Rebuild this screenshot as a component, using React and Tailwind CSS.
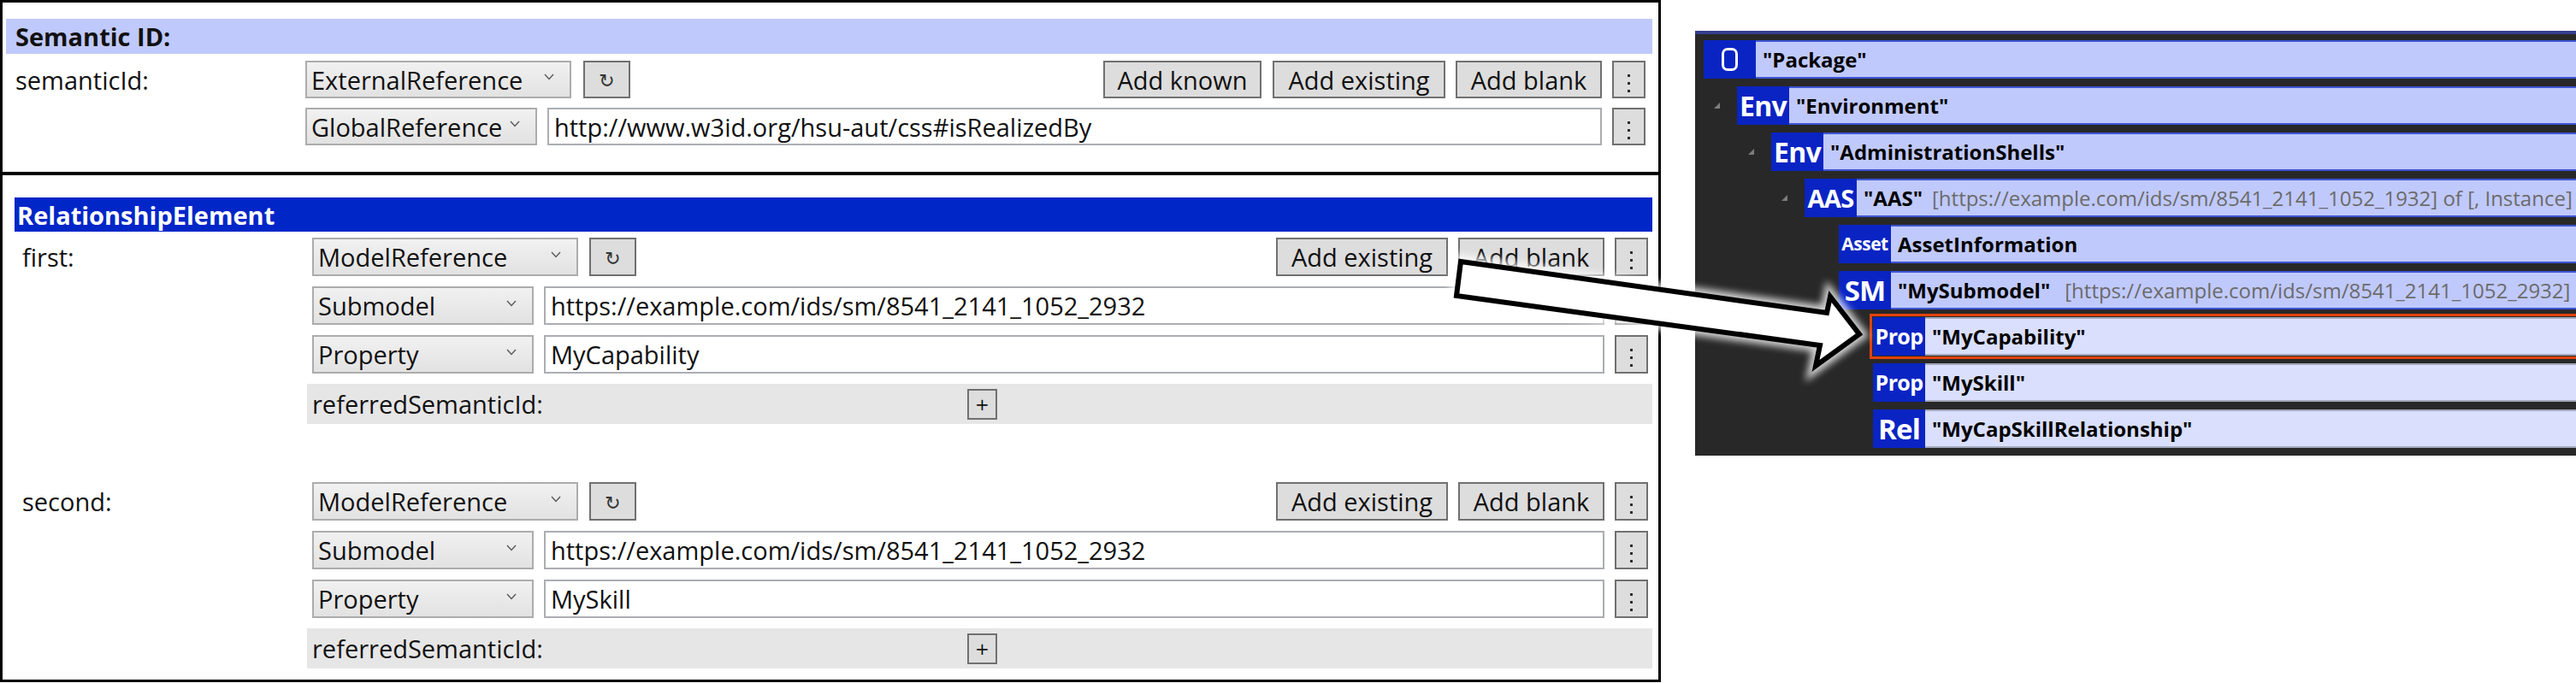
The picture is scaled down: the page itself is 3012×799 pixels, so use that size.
import React from 'react';

const Chevron = () => (
  <svg width="12" height="8" viewBox="0 0 12 8" className="shrink-0 mb-[6px]">
    <polyline points="1,1 6,6.5 11,1" fill="none" stroke="#5a5a5a" strokeWidth="1.4" />
  </svg>
);

const Combo = ({ label, w }) => (
  <div className={`${w} h-full shrink-0 flex items-center justify-between pl-[5px] pr-[18px] border-2 border-[#acacac] bg-linear-to-b from-[#f1f1f1] to-[#e2e2e2]`}>
    <span>{label}</span>
    <Chevron />
  </div>
);

const Btn = ({ w, children, className = '' }) => (
  <div className={`${w} h-full shrink-0 flex items-center justify-center border-2 border-[#707070] bg-[#dddddd] ${className}`}>
    {children}
  </div>
);

const Dots = ({ className = '' }) => (
  <Btn w="w-[39px]" className={className}>
    <div className="flex flex-col gap-[6px] mt-[8px]">
      <div className="w-[3px] h-[3px] bg-[#2d2d2d]" />
      <div className="w-[3px] h-[3px] bg-[#2d2d2d]" />
      <div className="w-[3px] h-[3px] bg-[#2d2d2d]" />
    </div>
  </Btn>
);

const Refresh = ({ className = '' }) => (
  <Btn w="w-[55px]" className={className}>
    <span className="font-['DejaVu_Sans',sans-serif] text-[22px] text-[#333] mt-[4px]">↻</span>
  </Btn>
);

const Field = ({ value }) => (
  <div className="flex-1 h-full flex items-center pl-[6px] border-2 border-[#abadb3] bg-white whitespace-nowrap overflow-hidden">
    {value}
  </div>
);

const Referred = () => (
  <div className="h-[47px] -ml-[6px] bg-[#e6e6e6] grid grid-cols-[1fr_auto_1fr] items-center pl-[6px]">
    <span>referredSemanticId:</span>
    <div className="w-[35px] h-[36px] flex items-center justify-center border-2 border-[#707070] bg-[#dddddd] font-['DejaVu_Sans',sans-serif] text-[20px]">+</div>
    <span />
  </div>
);

const RefBlock = ({ label, last, className = '' }) => (
  <div className={`flex ${className}`}>
    <div className="w-[348px] shrink-0 pl-[9px] h-[45px] flex items-center">{label}</div>
    <div className="flex-1 flex flex-col gap-[12px]">
      <div className="h-[45px] flex pr-[5px]">
        <Combo label="ModelReference" w="w-[311px]" />
        <Refresh className="ml-[13px]" />
        <div className="flex-1" />
        <Btn w="w-[201px]">Add existing</Btn>
        <Btn w="w-[171px]" className="ml-[12px]">Add blank</Btn>
        <Dots className="ml-[12px]" />
      </div>
      <div className="h-[45px] flex pr-[5px]">
        <Combo label="Submodel" w="w-[259px]" />
        <div className="ml-[12px] flex-1 flex"><Field value="https://example.com/ids/sm/8541_2141_1052_2932" /></div>
        <Dots className="ml-[12px]" />
      </div>
      <div className="h-[45px] flex pr-[5px]">
        <Combo label="Property" w="w-[259px]" />
        <div className="ml-[12px] flex-1 flex"><Field value={last} /></div>
        <Dots className="ml-[12px]" />
      </div>
      <Referred />
    </div>
  </div>
);

const LeftPanel = () => (
  <div className="w-[1942px] h-[798px] shrink-0 border-[3px] border-black flex flex-col text-[29px] leading-none text-[#111]">
    <div className="h-[198px] pl-[4px] pr-[7px] pt-[19px] flex flex-col">
      <div className="h-[41px] bg-[#c0c9fb] flex items-center pl-[11px] font-bold">Semantic ID:</div>
      <div className="flex mt-[8px]">
        <div className="w-[350px] shrink-0 pl-[11px] h-[44px] flex items-center">semanticId:</div>
        <div className="flex-1 flex flex-col gap-[11px] pr-[8px]">
          <div className="h-[44px] flex">
            <Combo label="ExternalReference" w="w-[311px]" />
            <Refresh className="ml-[14px]" />
            <div className="flex-1" />
            <Btn w="w-[185px]">Add known</Btn>
            <Btn w="w-[202px]" className="ml-[13px]">Add existing</Btn>
            <Btn w="w-[171px]" className="ml-[12px]">Add blank</Btn>
            <Dots className="ml-[12px]" />
          </div>
          <div className="h-[44px] flex">
            <Combo label="GlobalReference" w="w-[271px]" />
            <div className="ml-[12px] flex-1 flex"><Field value="http://www.w3id.org/hsu-aut/css#isRealizedBy" /></div>
            <Dots className="ml-[12px]" />
          </div>
        </div>
      </div>
    </div>
    <div className="flex-1 border-t-[4px] border-black pl-[14px] pr-[7px] pt-[26px] flex flex-col">
      <div className="h-[40px] bg-[#0026c8] text-white font-bold flex items-center pl-[3px]">RelationshipElement</div>
      <RefBlock label="first:" last="MyCapability" className="mt-[7px]" />
      <RefBlock label="second:" last="MySkill" className="mt-[68px]" />
    </div>
  </div>
);

const Caret = () => (
  <svg width="7" height="7" viewBox="0 0 7 7"><polygon points="7,0 7,7 0,7" fill="#7d7d7d" /></svg>
);

const TreeRow = ({ indent, caret, icon, iconCls, pale, selected, children }) => (
  <div className="flex h-[45px] shrink-0">
    {indent && (
      <div className={`${indent} shrink-0 flex items-center justify-end pr-[20px]`}>{caret && <Caret />}</div>
    )}
    <div className={`flex-1 flex border-y-2 ${pale ? 'bg-[#d9dffd] border-[#a3a9bd]' : 'bg-[#c0c9fb] border-[#3d55d2]'} ${selected ? 'outline-[3px] outline-solid outline-[#e0430d] outline-offset-[1px]' : ''}`}>
      <div className={`w-[61px] shrink-0 -my-[2px] bg-[#0a24c3] text-white font-bold flex items-center justify-center leading-none ${iconCls}`}>{icon}</div>
      <div className="flex items-center pl-[8px] text-[24px] whitespace-nowrap leading-none">{children}</div>
    </div>
  </div>
);

const Gray = ({ children, className = '' }) => (
  <span className={`font-normal text-[#6b6b6b] ${className}`}>{children}</span>
);

const PkgIcon = () => <div className="w-[19px] h-[27px] border-[3px] border-white rounded-[7px]" />;

const TreePanel = () => (
  <div className="ml-[40px] mt-[36px] flex-1 h-[497px] bg-[#282828] border-t-[4px] border-[#363d8e] pl-[10px] pt-[7px] flex flex-col gap-[9px] overflow-hidden">
    <TreeRow icon={<PkgIcon />}><span className="font-bold">"Package"</span></TreeRow>
    <TreeRow indent="w-[39px]" caret icon="Env" iconCls="text-[32px] tracking-tight"><span className="font-bold">"Environment"</span></TreeRow>
    <TreeRow indent="w-[79px]" caret icon="Env" iconCls="text-[32px] tracking-tight"><span className="font-bold">"AdministrationShells"</span></TreeRow>
    <TreeRow indent="w-[118px]" caret icon="AAS" iconCls="text-[29px] tracking-tight">
      <span className="font-bold">"AAS"</span>
      <Gray className="ml-[11px]">[https://example.com/ids/sm/8541_2141_1052_1932] of [, Instance]</Gray>
    </TreeRow>
    <TreeRow indent="w-[158px]" icon="Asset" iconCls="text-[21px] tracking-tight"><span className="font-bold">AssetInformation</span></TreeRow>
    <TreeRow indent="w-[158px]" icon="SM" iconCls="text-[33px] tracking-tight">
      <span className="font-bold">"MySubmodel"</span>
      <Gray className="ml-[17px]">[https://example.com/ids/sm/8541_2141_1052_2932]</Gray>
    </TreeRow>
    <TreeRow indent="w-[198px]" pale selected icon="Prop" iconCls="text-[25px] tracking-tight"><span className="font-bold">"MyCapability"</span></TreeRow>
    <TreeRow indent="w-[198px]" pale icon="Prop" iconCls="text-[25px] tracking-tight"><span className="font-bold">"MySkill"</span></TreeRow>
    <TreeRow indent="w-[198px]" pale icon="Rel" iconCls="text-[33px] tracking-tight"><span className="font-bold">"MyCapSkillRelationship"</span></TreeRow>
  </div>
);

const arrowPts = '1708,306 2136,366 2140,347 2174,391 2123,428 2128,404 1703,346';

const Arrow = () => (
  <svg className="absolute top-0 left-0 pointer-events-none" width="3012" height="799" viewBox="0 0 3012 799">
    <defs>
      <filter id="glow" x="-10%" y="-50%" width="120%" height="200%">
        <feGaussianBlur stdDeviation="4" />
      </filter>
    </defs>
    <polygon points={arrowPts} fill="none" stroke="#ffffff" strokeWidth="16" strokeLinejoin="miter" filter="url(#glow)" opacity="0.8" />
    <polygon points={arrowPts} fill="#ffffff" stroke="#000000" strokeWidth="6" strokeLinejoin="miter" />
  </svg>
);

export default function App() {
  return (
    <div className="relative w-[3012px] h-[799px] bg-white flex items-start overflow-hidden font-['Open_Sans','Noto_Sans',sans-serif] text-black">
      <LeftPanel />
      <TreePanel />
      <Arrow />
    </div>
  );
}
